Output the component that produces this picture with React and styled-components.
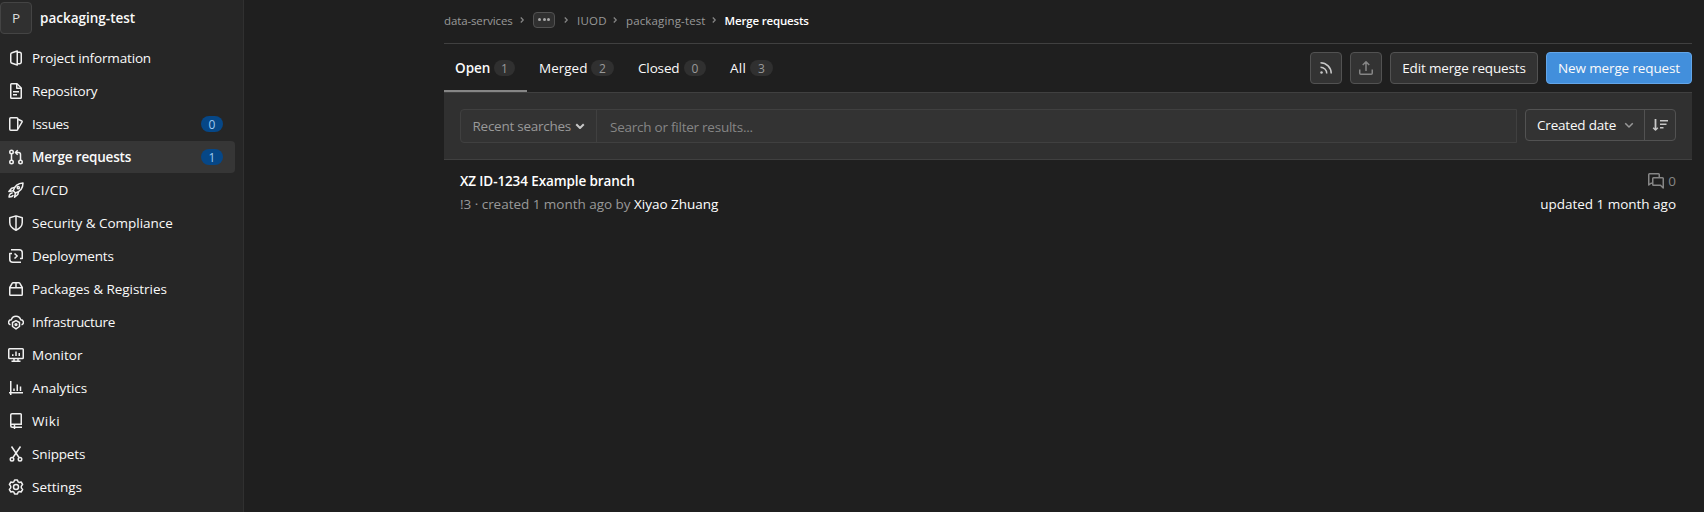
import React from 'react';
import styled, { createGlobalStyle, css } from 'styled-components';

const Global = createGlobalStyle`
  * { box-sizing: border-box; }
  body {
    margin: 0;
    background: #1f1f1f;
    color: #fafafa;
    font: 13.5px/20px "Open Sans", "Noto Sans", sans-serif;
    overflow: hidden;
  }
`;

const Page = styled.div`
  display: flex;
  height: 512px;
  overflow: hidden;
`;

const Text = styled.span`
  white-space: pre;
  letter-spacing: ${(p) => p.$track || 0}px;
  font-weight: ${(p) => (p.$bold ? 650 : 400)};
  ${(p) => p.$color && css`color: ${p.$color};`}
`;

const Svg = styled.svg`
  display: block;
  flex: none;
  width: ${(p) => p.$size || 16}px;
  height: ${(p) => p.$size || 16}px;
  color: ${(p) => p.$color || 'inherit'};
  fill: none;
  stroke: currentColor;
  stroke-width: ${(p) => p.$weight || 1.5};
  stroke-linejoin: round;
`;

const shapes = {
  project: (
    <>
      <path d="M9.25 1 4 2.700a1.750 1.750 0 0 0-1.250 1.650v7.300A1.750 1.750 0 0 0 4 13.300L9.250 15z" />
      <path d="M9.250 2.250h2.250a1.750 1.750 0 0 1 1.750 1.750v8a1.750 1.750 0 0 1-1.750 1.750H9.250" />
    </>
  ),
  doc: (
    <>
      <path d="M9 .75H3.5a.75.75 0 0 0-.75.75v13c0 .4.35.75.75.75h9c.4 0 .75-.35.75-.75V5L9 .75z" />
      <path d="M8.75 1v4.25H13M5 8.75h6M5 11.75h4" />
    </>
  ),
  issues: (
    <>
      <rect x="1.75" y="1.75" width="8" height="12.5" rx="1" />
      <path d="m10 3.2 3.8 1.8a.6.6 0 0 1 .3.8L10 13" />
    </>
  ),
  merge: (
    <>
      <circle cx="3.5" cy="3" r="1.75" />
      <circle cx="3.5" cy="13" r="1.75" />
      <circle cx="12.5" cy="13" r="1.75" />
      <path d="M3.5 5v6M12.5 11V5.5a2 2 0 0 0-2-2H8M9.700 1.200 7.400 3.500l2.300 2.300" />
    </>
  ),
  rocket: (
    <>
      <path d="M5.2 8.8C6.4 4.7 9.4 1.2 15 1c0 5.4-3 8.500-7.500 10zM5.200 8.800 7.500 11" />
      <path d="M6.600 5.500 3.600 6.200.9 9.500l4.300-.7M10.600 9.400 9.800 12.500l-3.200 2.700.8-4.200M4.700 11c-1.700-.3-3.400 1-3.700 4 1.700.1 3.600-.4 4.300-1.900" />
      <circle cx="10.300" cy="5.700" r="1.100" />
    </>
  ),
  shield: (
    <>
      <path d="M8 .9 14.250 2.800v4.700c0 3.500-2.500 6-6.250 7.700-3.750-1.700-6.250-4.200-6.250-7.700V2.800z" />
      <path d="M8 1v14" />
    </>
  ),
  deployments: (
    <>
      <path d="M3 1.750h8.250a3 3 0 0 1 3 3v5.750H12M13 14.250H4.750a3 3 0 0 1-3-3V5.500H4" />
      <path d="m6.500 5.500 2.700 2.500-2.700 2.500" />
    </>
  ),
  package: (
    <path d="M1.750 6.500 4.300 2.200a1 1 0 0 1 .9-.45h5.600a1 1 0 0 1 .9.45l2.550 4.300v7a.75.75 0 0 1-.75.75h-11a.75.75 0 0 1-.75-.75zM1.750 6.750h12.500M8 1.750v5" />
  ),
  cloudGear: (
    <>
      <path d="M2.500 10.800A2.600 2.600 0 0 1 3.300 5.700a4.900 4.900 0 0 1 9.400 0 2.600 2.600 0 0 1 .8 5.100" />
      <path d="m8 6.600 3.500 1.900v4L8 14.900l-3.500-2.400v-4z" />
      <circle cx="8" cy="10.600" r=".9" />
    </>
  ),
  monitor: (
    <>
      <rect x=".75" y="1.750" width="14.500" height="9.750" rx=".75" />
      <path d="M4.750 9V7.250M8 9V4.500M11.250 9V6M6 11.500v3M10 11.500v3M3.500 14.250h9" />
    </>
  ),
  chart: <path d="M2.750 1v14M1 12.750h14M6 11V8.500M9.250 11V4.500M12.500 11V6.500" />,
  book: (
    <>
      <path d="M13.250 11V1.500a.75.75 0 0 0-.75-.75H4a1.250 1.250 0 0 0-1.250 1.250v10.750a1.500 1.500 0 0 0 1.500 1.500H14M2.750 12.250c0-.6.5-1 1.250-1h10" />
      <path d="M6.500 12v4" />
    </>
  ),
  scissors: (
    <>
      <circle cx="4" cy="13.200" r="1.750" />
      <circle cx="12" cy="13.200" r="1.750" />
      <path d="M3.500.5 11 11.500M12.500.5 5 11.500" />
    </>
  ),
  gear: (
    <>
      <path d="M6.600.9h2.800l.7 1.900 1 .6 2-.4 1.500 2.500-1.300 1.600v1.800l1.300 1.600-1.500 2.500-2-.4-1 .6-.7 1.900H6.600l-.7-1.900-1-.6-2 .4-1.500-2.500 1.300-1.600V7.100L1.400 5.500 2.900 3l2 .4 1-.6z" />
      <circle cx="8" cy="8" r="2.500" />
    </>
  ),
  rss: (
    <>
      <path d="M2.500 7.250a6.250 6.250 0 0 1 6.250 6.250M2.500 2.750A10.750 10.750 0 0 1 13.250 13.500" />
      <circle cx="3.500" cy="12.500" r="1.250" fill="currentColor" stroke="none" />
    </>
  ),
  upload: <path d="M8 11V2M4.750 5 8 1.750 11.250 5M1.750 9.500v3.750c0 .55.450 1 1 1h10.500c.55 0 1-.450 1-1V9.500" />,
  sort: (
    <>
      <path d="M3.500 2v10.500" strokeWidth="1.800" />
      <path d="M1.200 10.700 3.500 13l2.300-2.300M8 3.750h8M8 7.250h6.500M8 10.750h3.500" />
    </>
  ),
  comments: (
    <>
      <path d="M4.500 10.250H3L.75 12V1.500c0-.4.350-.75.750-.75h9c.4 0 .75.350.75.750v2.700" />
      <path d="M5.500 4.750h9c.4 0 .75.350.75.750V15L12.500 12.250h-7a.75.75 0 0 1-.75-.75v-6c0-.4.350-.75.750-.750z" />
    </>
  ),
  chevronDown: <path d="m4.250 6.250 3.750 3.750 3.750-3.750" />,
  chevronRight: <path d="M5.500 3 10.500 8l-5 5" />,
};

const Icon = ({ name, size, color, weight }) => (
  <Svg viewBox="0 0 16 16" $size={size} $color={color} $weight={weight} aria-hidden="true">
    {shapes[name]}
  </Svg>
);

const Sidebar = styled.nav`
  width: 244px;
  flex: none;
  padding-top: 2px;
  background: #262626;
  border-right: 1px solid #303030;
`;

const ProjectHeader = styled.div`
  display: flex;
  align-items: center;
  gap: 8px;
  height: 32px;
  margin-bottom: 8px;
`;

const Avatar = styled.div`
  width: 32px;
  height: 32px;
  display: grid;
  place-items: center;
  background: #303030;
  border: 1px solid #444;
  border-radius: 4px;
  color: #dbdbdb;
`;

const NavItem = styled.div`
  display: flex;
  align-items: center;
  gap: 8px;
  width: 235px;
  height: 32px;
  margin-bottom: 1px;
  padding: 0 12px 0 8px;
  border-radius: 0 4px 4px 0;
  background: ${(p) => (p.$active ? '#363636' : 'transparent')};
  color: #fafafa;
`;

const CountPill = styled.span`
  width: 22px;
  height: 16px;
  margin-left: auto;
  border-radius: 8px;
  background: #064787;
  color: #9dc7f1;
  font-size: 12px;
  line-height: 17px;
  text-align: center;
`;

const Main = styled.main`
  flex: 1;
  padding: 0 12px 0 200px;
`;

const Breadcrumbs = styled.div`
  display: flex;
  align-items: center;
  height: 44px;
  padding-bottom: 2px;
  border-bottom: 1px solid #404040;
  color: #999;
  font-size: 11.5px;
`;

const Crumb = styled.div`
  display: flex;
  align-items: center;
  width: ${(p) => p.$width}px;
  justify-content: space-between;
  padding-right: 7px;
`;

const CrumbArrow = styled.span`
  margin-top: -2px;
  color: #868686;
`;

const MoreButton = styled.span`
  display: flex;
  align-items: center;
  justify-content: center;
  gap: 1.5px;
  width: 22px;
  height: 16px;
  margin-top: -2px;
  background: #303030;
  border: 1px solid #525252;
  border-radius: 4px;
`;

const Dot = styled.i`
  width: 3px;
  height: 3px;
  border-radius: 50%;
  background: #a8a8a8;
`;

const TopBar = styled.div`
  display: flex;
  justify-content: space-between;
  height: 49px;
  border-bottom: 1px solid #404040;
`;

const Tabs = styled.div`
  display: flex;
`;

const Tab = styled.div`
  display: flex;
  align-items: center;
  justify-content: space-between;
  width: ${(p) => p.$width}px;
  height: 48px;
  padding: 2px 12px 0 ${(p) => (p.$active ? 11 : 12)}px;
  border-bottom: 2px solid ${(p) => (p.$active ? '#868686' : 'transparent')};
`;

const TabCount = styled.span`
  width: ${(p) => p.$width || 22}px;
  height: 16px;
  border-radius: 8px;
  background: #303030;
  color: #999;
  font-size: 12px;
  line-height: 17px;
  text-align: center;
`;

const Actions = styled.div`
  display: flex;
  gap: 8px;
  padding-top: 8px;
`;

const Button = styled.div`
  display: flex;
  align-items: center;
  justify-content: center;
  width: ${(p) => p.$width || 32}px;
  height: 32px;
  background: ${(p) => (p.$primary ? '#428fdc' : '#333')};
  border: 1px solid ${(p) => (p.$primary ? '#63a6e9' : '#525252')};
  border-radius: 4px;
`;

const FilterBar = styled.div`
  display: flex;
  gap: 8px;
  height: 67px;
  padding: 16px 16px 0;
  background: #303030;
  border-bottom: 1px solid #404040;
`;

const SearchBox = styled.div`
  display: flex;
  flex: 1;
  height: 34px;
  background: #333;
  border: 1px solid #404040;
  border-radius: 4px 0 0 4px;
`;

const RecentSearches = styled.div`
  display: flex;
  align-items: center;
  justify-content: space-between;
  width: 136px;
  padding: 0 8px 0 11.5px;
  border-right: 1px solid #404040;
  color: #999;
`;

const SearchInput = styled.div`
  display: flex;
  align-items: center;
  padding: 2px 13px 0;
`;

const SortGroup = styled.div`
  display: flex;
  width: 151px;
  height: 32px;
  background: #333;
  border: 1px solid #525252;
  border-radius: 4px;
`;

const SortField = styled.div`
  display: flex;
  flex: 1;
  align-items: center;
  justify-content: space-between;
  padding: 0 7px 0 11px;
`;

const SortDirection = styled.div`
  display: grid;
  place-items: center;
  width: 31px;
  padding-right: 1px;
  border-left: 1px solid #525252;
`;

const RequestRow = styled.div`
  display: flex;
  justify-content: space-between;
  padding: 11px 16px;
`;

const Column = styled.div`
  display: flex;
  flex-direction: column;
  gap: 3px;
  align-items: ${(p) => (p.$end ? 'flex-end' : 'flex-start')};
`;

const Comments = styled.div`
  display: flex;
  align-items: center;
  gap: 4px;
  color: #868686;
`;

const nav = [
  ['project', 'Project information', -0.16],
  ['doc', 'Repository', -0.2],
  ['issues', 'Issues', -0.33, 0],
  ['merge', 'Merge requests', -0.18, 1],
  ['rocket', 'CI/CD', 0.2],
  ['shield', 'Security & Compliance', -0.01],
  ['deployments', 'Deployments', -0.17],
  ['package', 'Packages & Registries', -0.04],
  ['cloudGear', 'Infrastructure', -0.31],
  ['monitor', 'Monitor', 0],
  ['chart', 'Analytics', -0.05],
  ['book', 'Wiki', 0.4],
  ['scissors', 'Snippets', -0.15],
  ['gear', 'Settings', 0],
];

const tabs = [
  ['Open', 1, 83, 0, 21],
  ['Merged', 2, 99, 0, 23],
  ['Closed', 0, 92, -0.14, 22],
  ['All', 3, 67, 0.3, 23],
];

const crumbs = [
  ['data-services', 89, -0.13],
  [null, 44, 0],
  ['IUOD', 49, 0.26],
  ['packaging-test', 98.5, 0.14],
];

export default function App() {
  return (
    <Page>
      <Global />
      <Sidebar>
        <ProjectHeader>
          <Avatar>P</Avatar>
          <Text $bold $track={0}>packaging-test</Text>
        </ProjectHeader>
        {nav.map(([icon, label, track, count]) => {
          const active = label === 'Merge requests';
          return (
            <NavItem key={label} $active={active}>
              <Icon name={icon} color="#f0f0f0" />
              <Text $bold={active} $track={track}>{label}</Text>
              {count !== undefined && <CountPill>{count}</CountPill>}
            </NavItem>
          );
        })}
      </Sidebar>
      <Main>
        <Breadcrumbs>
          {crumbs.map(([label, width, track]) => (
            <Crumb key={label || 'more'} $width={width}>
              {label ? (
                <Text $track={track}>{label}</Text>
              ) : (
                <MoreButton><Dot /><Dot /><Dot /></MoreButton>
              )}
              <CrumbArrow><Icon name="chevronRight" size={8} weight={2.4} /></CrumbArrow>
            </Crumb>
          ))}
          <Text $bold $track={-0.17} $color="#fff">Merge requests</Text>
        </Breadcrumbs>
        <TopBar>
          <Tabs>
            {tabs.map(([label, count, width, track, pill], i) => (
              <Tab key={label} $width={width} $active={i === 0}>
                <Text $bold={i === 0} $track={track}>{label}</Text>
                <TabCount $width={pill}>{count}</TabCount>
              </Tab>
            ))}
          </Tabs>
          <Actions>
            <Button><Icon name="rss" color="#c8c8c8" /></Button>
            <Button><Icon name="upload" color="#868686" /></Button>
            <Button $width={148}><Text $track={-0.15}>Edit merge requests</Text></Button>
            <Button $width={146} $primary><Text $track={-0.13}>New merge request</Text></Button>
          </Actions>
        </TopBar>
        <FilterBar>
          <SearchBox>
            <RecentSearches>
              <Text $track={-0.26}>Recent searches</Text>
              <Icon name="chevronDown" color="#c8c8c8" weight={2} />
            </RecentSearches>
            <SearchInput>
              <Text $track={-0.24} $color="#868686">Search or filter results...</Text>
            </SearchInput>
          </SearchBox>
          <SortGroup>
            <SortField>
              <Text $track={-0.19}>Created date</Text>
              <Icon name="chevronDown" color="#999" />
            </SortField>
            <SortDirection><Icon name="sort" color="#c8c8c8" /></SortDirection>
          </SortGroup>
        </FilterBar>
        <RequestRow>
          <Column>
            <Text $bold $track={-0.11} $color="#fff">XZ ID-1234 Example branch</Text>
            <Text $track={-0.03} $color="#999">
              {'!3 · created 1 month ago by '}
              <Text $color="#fff">Xiyao Zhuang</Text>
            </Text>
          </Column>
          <Column $end>
            <Comments><Icon name="comments" /><Text>0</Text></Comments>
            <Text $track={-0.02}>updated 1 month ago</Text>
          </Column>
        </RequestRow>
      </Main>
    </Page>
  );
}
